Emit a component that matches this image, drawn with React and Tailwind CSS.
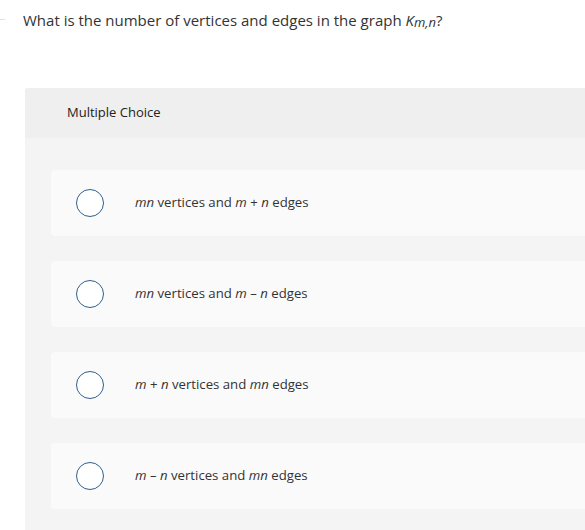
import React from "react";

const options = [
  [<i key="a">mn</i>, " vertices and ", <i key="b">m</i>, " + ", <i key="c">n</i>, " edges"],
  [<i key="a">mn</i>, " vertices and ", <i key="b">m</i>, " – ", <i key="c">n</i>, " edges"],
  [<i key="a">m</i>, " + ", <i key="b">n</i>, " vertices and ", <i key="c">mn</i>, " edges"],
  [<i key="a">m</i>, " – ", <i key="b">n</i>, " vertices and ", <i key="c">mn</i>, " edges"],
];

export default function App() {
  return (
    <div className="relative w-[585px] h-[530px] overflow-hidden bg-white text-[#333]" style={{ fontFamily: "'Open Sans', sans-serif" }}>
      <div className="absolute left-0 top-[19px] w-[5px] h-px bg-[#e0e0e0]" />
      <div className="pl-[23px] pt-[10px] h-[88px] text-[15px] leading-[20px]">
        What is the number of vertices and edges in the graph <i>K</i>
        <sub className="italic text-[13px] relative top-[1px]">m,n</sub>?
      </div>
      <div className="ml-[25px] rounded-tl-[3px] bg-[#f4f4f4] h-[442px]">
        <div className="h-[50px] bg-[#efefef] rounded-tl-[3px] flex items-center pl-[42px] text-[13px] text-[#222]">
          Multiple Choice
        </div>
        <div className="pt-[32px] pl-[26px] flex flex-col gap-[25px]">
          {options.map((o, i) => (
            <div key={i} className="h-[66px] bg-[#fafafa] rounded-l-[4px] flex items-center">
              <div className="ml-[25px] w-[28px] h-[28px] rounded-full border-[1.5px] border-[#2f5f8f] bg-white" />
              <div className="ml-[31px] text-[13.2px] text-[#333]">{o}</div>
            </div>
          ))}
        </div>
      </div>
    </div>
  );
}
